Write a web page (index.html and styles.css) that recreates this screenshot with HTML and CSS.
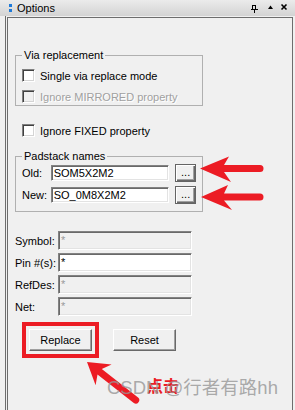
FILE: index.html
```html
<!DOCTYPE html>
<html>
<head>
<meta charset="utf-8">
<link rel="stylesheet" href="styles.css">
</head>
<body>
<div class="titlebar">
  <span class="grip"><i></i><i></i></span>
  <span class="title">Options</span>
  <svg class="tb-icons" width="45" height="16" viewBox="0 0 45 16">
    <rect x="4.5" y="5.5" width="3" height="4" fill="none" stroke="#000" stroke-width="1"/>
    <rect x="3" y="9" width="7" height="1" fill="#000"/>
    <rect x="6" y="10" width="1" height="3" fill="#000"/>
    <polygon points="20,9 22.5,5.5 25,9" fill="#000"/>
    <path d="M33.5,4.5 L38.5,9.5 M38.5,4.5 L33.5,9.5" stroke="#000" stroke-width="1.6"/>
  </svg>
</div>
<div class="outer">
  <div class="frame">
    <fieldset class="group via">
      <legend>Via replacement</legend>
      <div class="check"><span class="box"></span>Single via replace mode</div>
      <div class="check disabled"><span class="box"></span>Ignore MIRRORED property</div>
    </fieldset>
    <div class="check fixed"><span class="box"></span>Ignore FIXED property</div>
    <fieldset class="group pad">
      <legend>Padstack names</legend>
      <div class="prow"><span class="plabel">Old:</span><span class="field pfield">SOM5X2M2</span><span class="btn dots">...</span></div>
      <div class="prow"><span class="plabel">New:</span><span class="field pfield">SO_0M8X2M2</span><span class="btn dots">...</span></div>
    </fieldset>
    <div class="filters">
      <div class="frow"><span class="flabel">Symbol:</span><span class="field ffield dis">*</span></div>
      <div class="frow"><span class="flabel">Pin #(s):</span><span class="field ffield">*</span></div>
      <div class="frow"><span class="flabel">RefDes:</span><span class="field ffield dis">*</span></div>
      <div class="frow"><span class="flabel">Net:</span><span class="field ffield dis">*</span></div>
    </div>
    <div class="actions">
      <span class="btn big replace">Replace</span>
      <span class="btn big">Reset</span>
    </div>
  </div>
</div>
<svg class="overlay" width="295" height="410" viewBox="0 0 295 410">
  <path d="M200,168.5 L229,156.5 L224,165 L260,165 A3.5,3.5 0 0 1 260,172 L224,172 L231,182 Z" fill="#ec1c24"/>
  <path d="M201,197 L228,185 L224,193.5 L260,193.5 A3.5,3.5 0 0 1 260,200.5 L224,200.5 L232,210 Z" fill="#ec1c24"/>
  <path d="M87,362 L111.6,364.6 L101.8,369.1 L138.1,397.4 A3.5,3.5 0 0 1 133.8,402.9 L97.5,374.6 L95.6,385.2 Z" fill="#ec1c24"/>
</svg>
<span class="note">点击</span>
<span class="watermark">CSDN @行者有路hh</span>
</body>
</html>
```
FILE: styles.css
```css
* { box-sizing: border-box; }
html, body { margin: 0; }
body {
  width: 295px;
  height: 410px;
  overflow: hidden;
  position: relative;
  background: #f0f0f0;
  font-family: "Liberation Sans", Arial, sans-serif;
  font-size: 11px;
  color: #000;
}
.titlebar {
  height: 16px;
  display: flex;
  align-items: center;
  padding-left: 9px;
  background: linear-gradient(#ebebeb, #d3d3d3);
}
.grip { display: flex; flex-direction: column; gap: 2px; width: 3px; margin-right: 5px; }
.grip i { display: block; width: 3px; height: 3px; background: #1f7ad8; }
.title { font-size: 11px; line-height: 16px; }
.tb-icons { margin-left: auto; margin-right: 2px; display: block; }
.outer {
  height: 394px;
  margin-left: 5px;
  border-left: 1px solid #6d6d6d;
  padding-top: 1px;
  padding-left: 1px;
}
.frame {
  width: 286px;
  height: 393px;
  border: 1px solid #6d6d6d;
  border-bottom: none;
  padding-left: 7px;
}
.group {
  margin: 0;
  width: 188px;
  min-inline-size: 0;
  border: 1px solid #b0b0b0;
  padding: 7px 6px 2px 6px;
}
legend {
  padding: 0 2px;
  line-height: 13px;
  font-size: 11px;
}
.via { margin-top: 31px; }
.check { display: flex; align-items: center; height: 13px; white-space: nowrap; }
.check + .check { margin-top: 8px; }
.box {
  flex: none;
  width: 13px;
  height: 13px;
  margin-right: 5px;
  background: #fff;
  border: 1px solid;
  border-color: #808080 #fff #fff #808080;
  box-shadow: inset 1px 1px 0 #404040, inset -1px -1px 0 #d4d4d4;
}
.disabled { color: #a0a0a0; text-shadow: 1px 1px 0 #fff; }
.disabled .box { background: #f0f0f0; }
.fixed { margin-top: 18px; margin-left: 7px; }
.pad { margin-top: 13px; padding: 1px 6px 7px 6px; }
.prow { display: flex; align-items: center; height: 18px; }
.prow + .prow { margin-top: 4px; }
.plabel { width: 29px; }
.field {
  display: flex;
  align-items: center;
  padding-left: 2px;
  background: #fff;
  border: 1px solid;
  border-color: #828282 #fff #fff #828282;
  box-shadow: inset 1px 1px 0 #696969, inset -1px -1px 0 #e3e3e3;
  white-space: nowrap;
}
.pfield { width: 120px; height: 16px; }
.ffield { width: 134px; height: 19px; align-items: flex-start; padding-top: 2px; }
.field.dis { background: #f0f0f0; color: #9a9a9a; }
.btn {
  display: flex;
  align-items: center;
  justify-content: center;
  background: #f0f0f0;
}
.dots {
  width: 21px;
  height: 18px;
  margin-left: 6px;
  border: 1px solid #646464;
  box-shadow: inset 1px 1px 0 #fff, inset -1px -1px 0 #696969, inset -2px -2px 0 #a0a0a0;
  padding-bottom: 2px;
}
.filters { margin-top: 19px; display: flex; flex-direction: column; gap: 3px; }
.frow { display: flex; align-items: center; height: 19px; }
.flabel { width: 43px; }
.actions { margin-top: 13px; display: flex; gap: 21px; padding-left: 14px; }
.big {
  width: 63px;
  height: 22px;
  border: 1px solid;
  border-color: #fff #696969 #696969 #fff;
  box-shadow: inset -1px -1px 0 #a0a0a0;
}
.replace { outline: 4px solid #ec1c24; outline-offset: 3px; }
.overlay { position: absolute; left: 0; top: 0; pointer-events: none; }
.note {
  position: absolute;
  left: 147px;
  top: 375px;
  font-family: "Noto Sans CJK SC", sans-serif;
  font-weight: bold;
  font-size: 16px;
  line-height: 20px;
  color: #ec1c24;
}
.watermark {
  position: absolute;
  left: 107px;
  top: 377px;
  font-family: "Liberation Sans", "Noto Sans CJK SC", sans-serif;
  font-size: 18.5px;
  line-height: 22px;
  color: rgba(150, 150, 150, 0.8);
  white-space: nowrap;
}
```
